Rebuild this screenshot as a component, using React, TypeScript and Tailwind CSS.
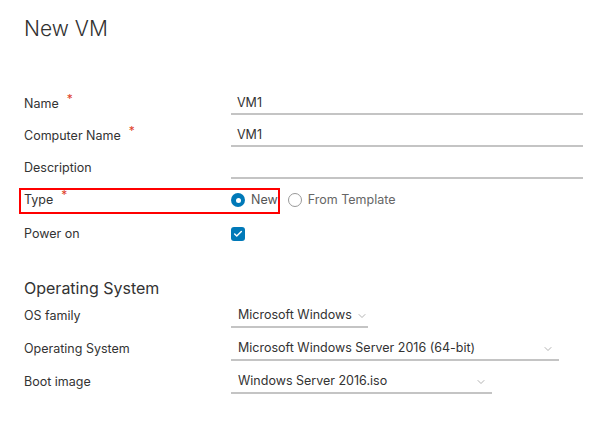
import { ChevronDown, Check } from 'lucide-react'

const font = { fontFamily: 'Inter, "Noto Sans", sans-serif' }

function Req() {
  return <span className="ml-[8px] text-[12px] leading-none text-[#e0402a] relative -top-[5px]">*</span>
}

function Row({ label, required, children, className = '' }: { label: string; required?: boolean; children?: React.ReactNode; className?: string }) {
  return (
    <div className={`flex items-center h-8 ${className}`}>
      <div className="w-[207px] shrink-0 flex items-center text-[12.5px] text-[#333]">
        {label}
        {required && <Req />}
      </div>
      {children}
    </div>
  )
}

function Input({ value }: { value?: string }) {
  return (
    <div className="w-[352px] h-[22px] border-b-2 border-[#c4c4c4] pl-[6px] flex items-center text-[12.5px] text-[#333]">
      {value}
    </div>
  )
}

function Select({ value, width }: { value: string; width: string }) {
  return (
    <div className={`${width} h-[22px] border-b-2 border-[#c4c4c4] pl-[7px] pr-[5px] flex items-center justify-between gap-[4px] text-[12.5px] text-[#333]`}>
      <span className="whitespace-nowrap">{value}</span>
      <ChevronDown className="w-[12px] h-[12px] shrink-0 text-[#9a9a9a]" strokeWidth={1.5} />
    </div>
  )
}

export default function App() {
  return (
    <div className="w-[602px] h-[427px] bg-white pl-6" style={font}>
      <h1 className="pt-[16px] text-[21px] leading-[26px] font-light text-[#313131]">New VM</h1>

      <div className="mt-[46px]">
        <Row label="Name" required>
          <Input value="VM1" />
        </Row>
        <Row label="Computer Name" required>
          <Input value="VM1" />
        </Row>
        <Row label="Description">
          <Input />
        </Row>
        <Row label="Type" required className="relative">
          <div className="absolute left-[-5px] top-[4px] w-[261px] h-[26px] border-2 border-[#ff0000]" />
          <div className="flex items-center gap-[6px] text-[12.5px]">
            <span className="w-[14px] h-[14px] rounded-full bg-[#0079b8] flex items-center justify-center">
              <span className="w-[5px] h-[5px] rounded-full bg-white" />
            </span>
            <span className="text-[#555]">New</span>
            <span className="ml-[4px] w-[14px] h-[14px] rounded-full border border-[#999] bg-white" />
            <span className="text-[#666]">From Template</span>
          </div>
        </Row>
        <Row label="Power on" className="mt-[2px]">
          <span className="w-[14px] h-[14px] rounded-[3px] bg-[#0079b8] flex items-center justify-center">
            <Check className="w-[10px] h-[10px] text-white" strokeWidth={3.5} />
          </span>
        </Row>
      </div>

      <h2 className="mt-[28px] text-[16px] leading-[20px] text-[#333]">Operating System</h2>

      <div className="mt-[2px]">
        <Row label="OS family" className="h-[33px]">
          <Select value="Microsoft Windows" width="w-[137px]" />
        </Row>
        <Row label="Operating System" className="h-[33px]">
          <Select value="Microsoft Windows Server 2016 (64-bit)" width="w-[328px]" />
        </Row>
        <Row label="Boot image" className="h-[33px]">
          <Select value="Windows Server 2016.iso" width="w-[261px]" />
        </Row>
      </div>
    </div>
  )
}
